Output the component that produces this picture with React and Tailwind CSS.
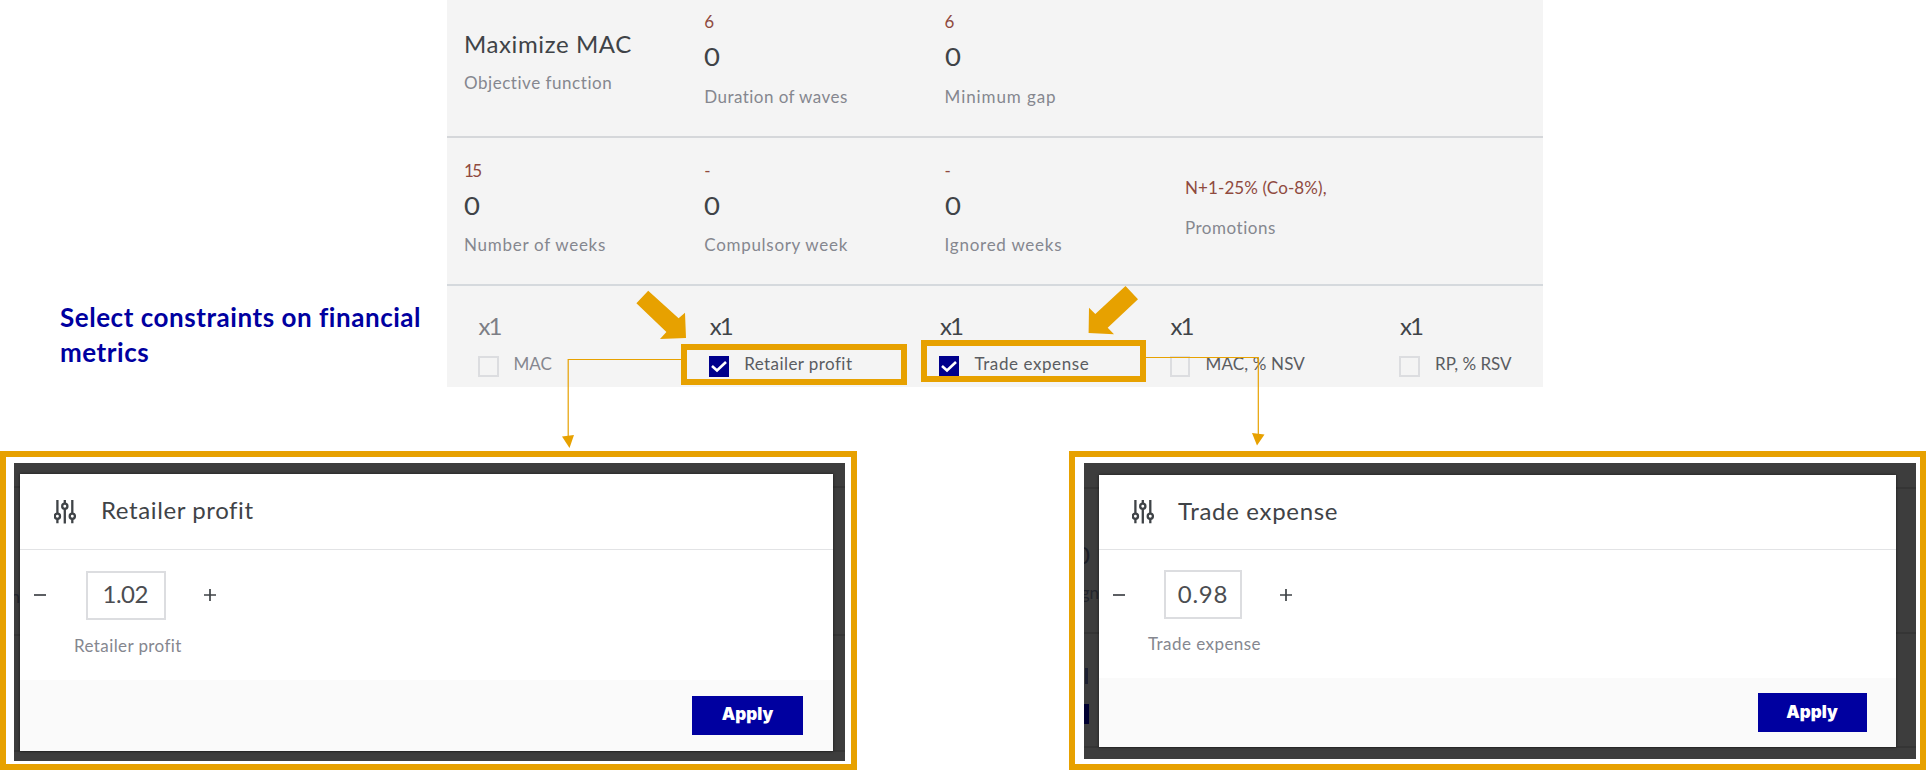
import React from "react";

const big = "h-8 text-[24px] leading-8 whitespace-pre text-[#3f4347]";
const small = "h-6 text-[17px] leading-6 whitespace-pre text-[#85878f]";
const red = "h-6 text-[17px] leading-6 whitespace-pre text-[#8f4a3e]";

function Metric({ limit, value, label, tracking, className = "" }) {
  return (
    <div className={"w-[240.3px] " + className}>
      <div className={red + " tracking-[-1.5px]"}>{limit}</div>
      <div className="mt-[6px] h-8 origin-left scale-x-110 text-[25px] leading-8 text-[#3f4347]">{value}</div>
      <div className={small + " mt-[12.5px] " + tracking}>{label}</div>
    </div>
  );
}

function Check({ checked }) {
  return checked ? (
    <span className="mt-[4px] flex h-[21px] w-[20px] items-center justify-center bg-[#00008c]">
      <svg width="16" height="14" viewBox="0 0 16 14" fill="none" stroke="#fff" strokeWidth="2.6">
        <path d="M1 6 L6 10.5 L15 2" />
      </svg>
    </span>
  ) : (
    <span className="mt-[4px] h-[21px] w-[20.5px] border-2 border-[#dcdde0]" />
  );
}

function Constraint({ label, checked, muted, tracking, className = "" }) {
  return (
    <div className={className}>
      <div className={"h-8 pl-[0.5px] text-[24px] leading-8 tracking-[-2px] " + (muted ? "text-[#7c7e85]" : "text-[#3f4347]")}>x1</div>
      <div className="mt-[10px] flex gap-[15px]">
        <Check checked={checked} />
        <span className={"text-[17px] leading-6 whitespace-pre " + tracking + " " + (muted ? "text-[#85878f]" : "text-[#5a5c61]")}>{label}</span>
      </div>
    </div>
  );
}

function Sliders() {
  return (
    <svg width="22" height="24" viewBox="0 0 22 24" fill="none" stroke="#3f4347" strokeWidth="2.3">
      <path d="M3.4 0V13.5M3.4 19V23.2M10.8 0V3.5M10.8 9V23.5M18.3 0V13.5M18.3 19V23.2" />
      <circle cx="3.4" cy="16.3" r="2.6" />
      <circle cx="10.8" cy="6.3" r="2.6" />
      <circle cx="18.3" cy="16.3" r="2.6" />
    </svg>
  );
}

function Sign({ plus }) {
  return (
    <svg width="12" height="12" viewBox="0 0 12 12" stroke="#3f4347" strokeWidth="1.7">
      <path d={plus ? "M0 6H12M6 0V12" : "M0 6H12"} />
    </svg>
  );
}

function Backdrop({ className, children }) {
  return <div className={"relative bg-[#3d3d3d] " + className}>{children}</div>;
}

function BackdropLine({ className }) {
  return <div className={"absolute inset-x-0 h-[2px] bg-[#353535] " + className} />;
}

export default function App() {
  return (
    <div className="relative flex h-[770px] w-[1926px] flex-col justify-between overflow-hidden bg-white font-['Lato',sans-serif]">
      <div className="flex h-[387px]">
        <h1 className="w-[447px] pt-[300px] pl-[60px] text-[26px] leading-[35px] font-bold tracking-[0.54px] whitespace-pre text-[#0000a0]">
          {"Select constraints on financial\nmetrics"}
        </h1>
        <section className="flex w-[1096px] flex-col bg-[#f4f4f4]">
          <div className="flex h-[137.5px] border-b-2 border-[#d5d7da] pl-[17px]">
            <div className="w-[240.3px] pt-[28px]">
              <div className={big + " tracking-[0.6px]"}>Maximize MAC</div>
              <div className={small + " mt-[11px] tracking-[0.54px]"}>Objective function</div>
            </div>
            <Metric className="pt-[10px]" limit="6" value="0" label="Duration of waves" tracking="tracking-[0.45px]" />
            <Metric className="pt-[10px]" limit="6" value="0" label="Minimum gap" tracking="tracking-[0.9px]" />
          </div>
          <div className="flex h-[148px] border-b-2 border-[#d5d9dd] pt-[21px] pl-[17px]">
            <Metric limit="15" value="0" label="Number of weeks" tracking="tracking-[0.72px]" />
            <Metric limit="-" value="0" label="Compulsory week" tracking="tracking-[0.7px]" />
            <Metric limit="-" value="0" label="Ignored weeks" tracking="tracking-[0.75px]" />
            <div className="pt-[17.5px]">
              <div className={red + " tracking-[0.12px]"}>N+1-25% (Co-8%),</div>
              <div className={small + " mt-[16px] tracking-[0.53px]"}>Promotions</div>
            </div>
          </div>
          <div className="flex pt-[24.5px] pl-[31px]">
            <Constraint className="w-[231.2px]" label="MAC" muted tracking="tracking-[0px]" />
            <Constraint className="w-[230.3px]" label="Retailer profit" checked tracking="tracking-[0.43px]" />
            <Constraint className="w-[230.5px]" label="Trade expense" checked tracking="tracking-[0.58px]" />
            <Constraint className="w-[229.5px]" label="MAC, % NSV" tracking="tracking-[0.15px]" />
            <Constraint label="RP, % RSV" tracking="tracking-[0px]" />
          </div>
        </section>
      </div>

      <div className="flex h-[319px] justify-between">
        <div className="w-[857px] border-6 border-[#e7a100] pt-[6px] pl-[8px]">
          <Backdrop className="h-[298px] w-[831px] pt-[10.5px] pl-[6px]">
            <BackdropLine className="top-[23px]" />
            <BackdropLine className="top-[171px]" />
            <BackdropLine className="top-[287px]" />
            <div className="absolute top-[122px] left-0 flex h-6 w-[6px] justify-end overflow-hidden text-[17px] leading-6 text-[#23252c]">n</div>
            <div className="relative flex h-[277px] w-[813px] flex-col bg-white shadow-[0_0_3px_rgba(0,0,0,0.6)]">
              <div className="flex h-[76.5px] items-start gap-[25px] border-b-[1.5px] border-[#e2e3e5] pt-[26px] pl-[34px]">
                <Sliders />
                <h2 className={big + " -mt-[6px] tracking-[0.6px]"}>Retailer profit</h2>
              </div>
              <div className="h-[129.5px] pt-[20.5px]">
                <div className="flex items-center pl-[14px]">
                  <Sign />
                  <div className="ml-[40px] flex h-[49.5px] w-[79.5px] items-center justify-center border-2 border-[#dcdde0] pr-[1px] pb-[2px] text-[24px] leading-8 tracking-[-0.5px] text-[#4b4d51]">1.02</div>
                  <div className="ml-[38.5px]"><Sign plus /></div>
                </div>
                <div className={small + " mt-[13.5px] pl-[54px] tracking-[0.4px]"}>Retailer profit</div>
              </div>
              <div className="flex flex-1 justify-end bg-[#fafafa] pt-[16px] pr-[30px]">
                <button className="h-[39px] w-[111px] bg-[#0000a0] font-['Inter',sans-serif] text-[17px] font-black text-white">Apply</button>
              </div>
            </div>
          </Backdrop>
        </div>

        <div className="w-[857px] border-6 border-[#e7a100] pt-[6px] pl-[9px]">
          <Backdrop className="h-[296px] w-[832px] pt-[12px] pl-[15px]">
            <BackdropLine className="top-[24px]" />
            <BackdropLine className="top-[169px]" />
            <BackdropLine className="top-[283px]" />
            <div className="absolute top-[76px] left-0 flex h-8 w-[6px] justify-end overflow-hidden text-[24px] leading-8 text-[#1d1f26]">0</div>
            <div className="absolute top-[118px] left-0 flex h-6 w-[15px] justify-end overflow-hidden text-[17px] leading-6 text-[#23252c]">gn</div>
            <div className="absolute top-[205px] left-[1px] h-[16px] w-[2.5px] bg-[#1d2030]" />
            <div className="absolute top-[241px] left-0 h-[20px] w-[5px] bg-[#000030]" />
            <div className="relative flex h-[271.5px] w-[797px] flex-col bg-white shadow-[0_0_3px_rgba(0,0,0,0.6)]">
              <div className="flex h-[75px] items-start gap-[24px] border-b-[1.5px] border-[#e2e3e5] pt-[25px] pl-[33px]">
                <Sliders />
                <h2 className={big + " -mt-[5.5px] tracking-[0.68px]"}>Trade expense</h2>
              </div>
              <div className="h-[128px] pt-[20px]">
                <div className="flex items-center pl-[14px]">
                  <Sign />
                  <div className="ml-[39px] flex h-[49px] w-[78px] items-center justify-center border-2 border-[#dcdde0] pb-[1.5px] text-[24px] leading-8 tracking-[0.8px] text-[#4b4d51]">0.98</div>
                  <div className="ml-[37.5px]"><Sign plus /></div>
                </div>
                <div className={small + " mt-[13px] pl-[49px] tracking-[0.45px]"}>Trade expense</div>
              </div>
              <div className="flex flex-1 justify-end bg-[#fafafa] pt-[15px] pr-[29.5px]">
                <button className="h-[38.5px] w-[109px] bg-[#0000a0] font-['Inter',sans-serif] text-[17px] font-black text-white">Apply</button>
              </div>
            </div>
          </Backdrop>
        </div>
      </div>

      <div className="absolute top-[344px] left-[681px] h-[41px] w-[226px] border-6 border-[#e7a100]" />
      <div className="absolute top-[340px] left-[921px] h-[42px] w-[225px] border-6 border-[#e7a100]" />
      <svg className="absolute top-0 left-0" width="1926" height="460" viewBox="0 0 1926 460">
        <g fill="#e7a100">
          <path d="M648.2 290.7L678.6 318.3L685 312.7L686 338L660 339L666.4 332L636.4 303.3Z" />
          <path d="M1125.5 286L1138 299.3L1107.7 327.7L1114 334.3L1088.6 333L1089 307.7L1095.3 314Z" />
          <path d="M562 436.5L574 435L569.5 448Z" />
          <path d="M1252 433L1264.5 434.5L1257 445.5Z" />
        </g>
        <path d="M681 359.5H568.2V436M1146 357.5H1258.3V434" fill="none" stroke="#e7a100" strokeWidth="1.2" />
      </svg>
    </div>
  );
}
